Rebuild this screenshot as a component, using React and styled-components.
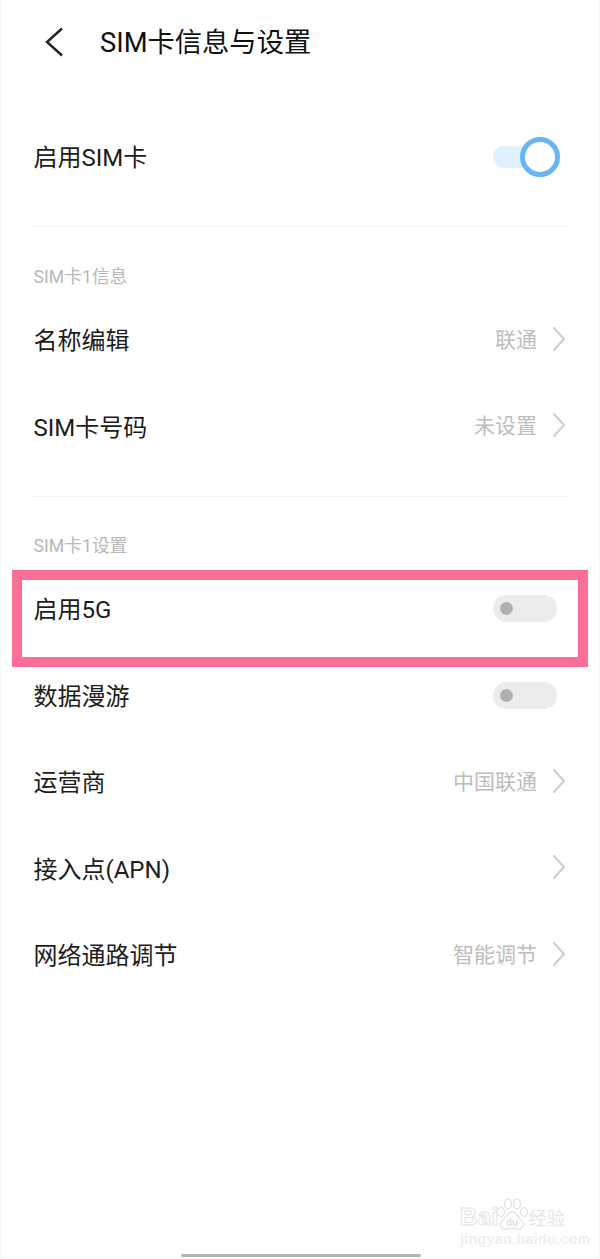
import React from "react";
import styled, { createGlobalStyle } from "styled-components";

const Global = createGlobalStyle`
  html, body { margin: 0; padding: 0; background: #fff; }
  * { box-sizing: border-box; }
`;

const Page = styled.div`
  position: relative;
  width: 600px;
  height: 1259px;
  overflow: hidden;
  background: #fff;
  border-left: 1px solid #f6f6f6;
  border-right: 1px solid #f6f6f6;
  font-family: Roboto, "Noto Sans CJK SC", "Liberation Sans", sans-serif;
  color: #1a1a1a;
`;

const Header = styled.header`
  display: flex;
  align-items: center;
  height: 86px;
  padding-left: 43px;
  gap: 36px;
`;

const BackIcon = styled.svg`
  width: 20px;
  height: 30px;
  flex: none;
  margin-top: -2px;
`;

const Title = styled.h1`
  margin: 2px 0 0;
  font-size: 27.3px;
  font-weight: 400;
  line-height: 1;
  color: #111;
`;

const List = styled.main`
  padding-top: ${(p) => p.$top}px;
`;

const Row = styled.div`
  position: relative;
  display: flex;
  align-items: center;
  justify-content: space-between;
  height: 86.5px;
  padding: 0 33px 0 32.5px;
`;

const Label = styled.span`
  margin-top: 3px;
  font-size: 24px;
  line-height: 1;
  color: #1c1c1c;
`;

const Trailing = styled.div`
  display: flex;
  align-items: center;
  gap: 15px;
`;

const Value = styled.span`
  margin-top: 1px;
  font-size: 21px;
  line-height: 1;
  color: #bdbdbd;
`;

const ChevronIcon = styled.svg`
  width: 14px;
  height: 26px;
  flex: none;
  margin-top: -2px;
`;

const Divider = styled.hr`
  margin: ${(p) => p.$top}px 32px 0;
  border: 0;
  height: 1px;
  background: #f5f5f5;
`;

const SectionLabel = styled.div`
  margin-top: ${(p) => p.$top}px;
  margin-bottom: 9px;
  padding: 0 32.5px;
  height: 24px;
  font-size: 17.7px;
  line-height: 26px;
  color: #b8b8b8;
`;

const Track = styled.div`
  position: relative;
  flex: none;
  width: ${(p) => (p.$on ? 44 : 64)}px;
  height: ${(p) => (p.$on ? 22 : 27)}px;
  margin-right: ${(p) => (p.$on ? 29 : 9)}px;
  margin-top: ${(p) => (p.$on ? 2 : 0)}px;
  border-radius: 14px;
  background: ${(p) => (p.$on ? "#e0f0fc" : "#ececec")};
`;

const Dot = styled.span`
  position: absolute;
  left: 7px;
  top: 7px;
  width: 13px;
  height: 13px;
  border-radius: 50%;
  background: #b0b0b0;
`;

const Ring = styled.span`
  position: absolute;
  left: 27px;
  top: -9px;
  width: 40px;
  height: 40px;
  border-radius: 50%;
  background: #fff;
  border: 5px solid #66b6f5;
`;

const Highlight = styled.div`
  position: absolute;
  left: 11px;
  right: 11px;
  top: 4px;
  height: 97px;
  border: 10px solid #fb6f96;
  pointer-events: none;
`;

const HomeBar = styled.div`
  position: absolute;
  left: 180px;
  bottom: 2px;
  width: 240px;
  height: 3px;
  border-radius: 2px;
  background: #b4b4b4;
`;

const Watermark = styled.div`
  position: absolute;
  left: 459px;
  top: 1191px;
  width: 112px;
  height: 56px;
`;

const WatermarkTop = styled.div`
  display: flex;
  align-items: flex-end;
  height: 40px;
  line-height: 1;
`;

const WatermarkBrand = styled.span`
  font-family: "Liberation Sans", sans-serif;
  font-size: 24px;
  font-weight: 700;
  letter-spacing: 0.5px;
  margin-bottom: 2px;
  color: #fff;
  -webkit-text-stroke: 1px #e4e4e4;
`;

const WatermarkPaw = styled.svg`
  width: 32px;
  height: 34px;
  margin-left: -3px;
  flex: none;
`;

const WatermarkDu = styled.text`
  font-family: "Liberation Sans", sans-serif;
  font-size: 10px;
  font-weight: 700;
  fill: #e2e2e2;
  stroke: none;
`;

const WatermarkCn = styled.span`
  font-family: "Noto Sans CJK SC", sans-serif;
  font-size: 18px;
  margin-left: 1px;
  margin-bottom: 5px;
  color: #e6e6e6;
`;

const WatermarkUrl = styled.div`
  font-family: "Liberation Sans", sans-serif;
  font-size: 14.5px;
  font-weight: 700;
  line-height: 14px;
  margin-top: 1px;
  letter-spacing: 0.2px;
  white-space: nowrap;
  color: #efefef;
`;

const Chevron = () => (
  <ChevronIcon viewBox="0 0 14 26" fill="none">
    <path d="M1.5 1.5 L12 13 L1.5 24.5" stroke="#cdcdcd" strokeWidth="2" />
  </ChevronIcon>
);

const Toggle = ({ on }) => (
  <Track $on={on}>{on ? <Ring /> : <Dot />}</Track>
);

const LinkRow = ({ label, value }) => (
  <Row>
    <Label>{label}</Label>
    <Trailing>
      {value && <Value>{value}</Value>}
      <Chevron />
    </Trailing>
  </Row>
);

const ToggleRow = ({ label, on, highlighted }) => (
  <Row>
    <Label>{label}</Label>
    <Toggle on={on} />
    {highlighted && <Highlight />}
  </Row>
);

export default function App() {
  return (
    <Page>
      <Global />
      <Header>
        <BackIcon viewBox="0 0 20 30" fill="none">
          <path d="M18 1.5 L3 15 L18 28.5" stroke="#222" strokeWidth="2.4" />
        </BackIcon>
        <Title>SIM卡信息与设置</Title>
      </Header>
      <List $top={27}>
        <ToggleRow label="启用SIM卡" on />
        <Divider $top={26} />
        <SectionLabel $top={37}>SIM卡1信息</SectionLabel>
        <LinkRow label="名称编辑" value="联通" />
        <LinkRow label="SIM卡号码" value="未设置" />
        <Divider $top={26} />
        <SectionLabel $top={36}>SIM卡1设置</SectionLabel>
        <ToggleRow label="启用5G" highlighted />
        <ToggleRow label="数据漫游" />
        <LinkRow label="运营商" value="中国联通" />
        <LinkRow label="接入点(APN)" />
        <LinkRow label="网络通路调节" value="智能调节" />
      </List>
      <Watermark>
        <WatermarkTop>
          <WatermarkBrand>Bai</WatermarkBrand>
          <WatermarkPaw viewBox="0 0 32 34" fill="#fff" stroke="#e4e4e4" strokeWidth="1.4">
            <ellipse cx="5" cy="15" rx="3.5" ry="4.5" />
            <ellipse cx="12" cy="7" rx="3.5" ry="5" />
            <ellipse cx="21" cy="7" rx="3.5" ry="5" />
            <ellipse cx="28" cy="15" rx="3.5" ry="4.5" />
            <path d="M16 15 C11 15 10 21 6 24 C2 28 6 33 11 32 C14 31 18 31 21 32 C26 33 30 28 26 24 C22 21 21 15 16 15 Z" />
            <WatermarkDu x="10" y="29">du</WatermarkDu>
          </WatermarkPaw>
          <WatermarkCn>经验</WatermarkCn>
        </WatermarkTop>
        <WatermarkUrl>jingyan.baidu.com</WatermarkUrl>
      </Watermark>
      <HomeBar />
    </Page>
  );
}
